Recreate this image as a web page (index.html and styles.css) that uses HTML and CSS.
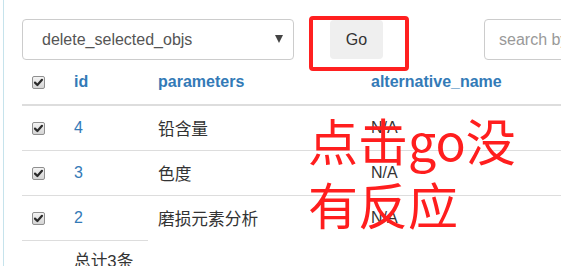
FILE: index.html
```html
<!DOCTYPE html>
<html>
<head>
<meta charset="utf-8">
<link rel="stylesheet" href="styles.css">
</head>
<body>
<div class="page">
  <div class="actions">
    <div class="select">
      <span class="select-text">delete_selected_objs</span>
      <span class="caret"></span>
    </div>
    <div class="go">Go</div>
    <div class="search"><span class="placeholder">search by</span></div>
  </div>
  <div class="table">
    <div class="tr thead">
      <div class="c c-cb"><span class="cb"><svg viewBox="0 0 13 13" width="13" height="13"><path d="M3 6.6 L5.4 9 L10 3.8" fill="none" stroke="#2b2b2b" stroke-width="2.2" stroke-linecap="round" stroke-linejoin="round"/></svg></span></div>
      <div class="c c-id th">id</div>
      <div class="c c-p th">parameters</div>
      <div class="c c-alt th">alternative_name</div>
    </div>
    <div class="tr">
      <div class="c c-cb"><span class="cb"><svg viewBox="0 0 13 13" width="13" height="13"><path d="M3 6.6 L5.4 9 L10 3.8" fill="none" stroke="#2b2b2b" stroke-width="2.2" stroke-linecap="round" stroke-linejoin="round"/></svg></span></div>
      <div class="c c-id link">4</div>
      <div class="c c-p cjk">铅含量</div>
      <div class="c c-alt">N/A</div>
    </div>
    <div class="tr">
      <div class="c c-cb"><span class="cb"><svg viewBox="0 0 13 13" width="13" height="13"><path d="M3 6.6 L5.4 9 L10 3.8" fill="none" stroke="#2b2b2b" stroke-width="2.2" stroke-linecap="round" stroke-linejoin="round"/></svg></span></div>
      <div class="c c-id link">3</div>
      <div class="c c-p cjk">色度</div>
      <div class="c c-alt">N/A</div>
    </div>
    <div class="tr last">
      <div class="c c-cb"><span class="cb"><svg viewBox="0 0 13 13" width="13" height="13"><path d="M3 6.6 L5.4 9 L10 3.8" fill="none" stroke="#2b2b2b" stroke-width="2.2" stroke-linecap="round" stroke-linejoin="round"/></svg></span></div>
      <div class="c c-id link">2</div>
      <div class="c c-p cjk">磨损元素分析</div>
      <div class="c c-alt">N/A</div>
    </div>
    <div class="tfoot"><span class="cjk">总计3条</span></div>
  </div>
  <div class="note-box"></div>
  <div class="note">点击go没<br>有反应</div>
</div>
</body>
</html>
```
FILE: styles.css
```css
html, body {
  margin: 0;
  padding: 0;
  background: #fff;
  overflow: hidden;
}
body {
  font-family: "Liberation Sans", "Noto Sans CJK SC", sans-serif;
  font-size: 16px;
  color: #333;
}
.page {
  position: relative;
  margin-left: 3px;
  border-left: 1px solid #c6e3ec;
  padding-left: 18px;
  height: 266px;
  box-sizing: border-box;
}
.actions {
  display: flex;
  align-items: flex-start;
  padding-top: 19px;
  height: 41px;
}
.actions > * {
  flex: none;
}
.select {
  box-sizing: border-box;
  width: 272px;
  height: 41px;
  border: 1px solid #ccc;
  border-radius: 4px;
  display: flex;
  align-items: center;
  justify-content: space-between;
  padding: 0 10px 0 19px;
  color: #555;
}
.caret {
  width: 0;
  height: 0;
  border-left: 4px solid transparent;
  border-right: 4px solid transparent;
  border-top: 8px solid #444;
  margin-top: -1px;
}
.go {
  margin-left: 36px;
  margin-top: 1px;
  width: 53px;
  height: 39px;
  background: #efefef;
  border-radius: 4px;
  display: flex;
  align-items: center;
  justify-content: center;
  color: #333;
}
.search {
  box-sizing: border-box;
  margin-left: 101px;
  width: 120px;
  height: 41px;
  border: 1px solid #ccc;
  border-radius: 4px;
  display: flex;
  align-items: center;
  padding-left: 14px;
  white-space: nowrap;
  overflow: hidden;
}
.placeholder {
  color: #999;
}
.table {
  width: 600px;
}
.tr {
  display: flex;
  height: 44px;
  align-items: center;
  border-bottom: 1px solid #ddd;
}
.tr.thead {
  height: 44px;
  border-bottom: 2px solid #ddd;
}
.tr.last {
  border-bottom: none;
}
.c {
  box-sizing: border-box;
  padding-left: 8px;
  white-space: nowrap;
  flex: none;
}
.c-cb {
  width: 44px;
  padding-left: 10px;
  display: flex;
  align-items: center;
}
.c-id { width: 84px; }
.c-p { width: 213px; }
.c-alt { width: 200px; }
.th {
  font-weight: bold;
  color: #337ab7;
}
.link {
  color: #337ab7;
}
.cjk {
  font-size: 16.7px;
}
.cb {
  box-sizing: border-box;
  display: block;
  width: 13px;
  height: 13px;
  border: 1px solid #8f8f8f;
  border-radius: 2px;
  background: linear-gradient(#f4f4f4, #d4d4d4);
  position: relative;
}
.cb svg {
  position: absolute;
  left: -1px;
  top: -1px;
}
.tfoot {
  width: 126px;
  border-top: 1px solid #ddd;
  padding-left: 52px;
  padding-top: 7px;
  box-sizing: border-box;
  white-space: nowrap;
}
.note-box {
  position: absolute;
  left: 305px;
  top: 16px;
  width: 100px;
  height: 55px;
  box-sizing: border-box;
  border: 4px solid #ff2020;
  border-radius: 4px;
}
.note {
  position: absolute;
  left: 304px;
  top: 107px;
  font-family: "Noto Sans CJK SC", "Noto Sans", sans-serif;
  font-size: 50px;
  line-height: 64px;
  color: #ff1e1e;
  white-space: nowrap;
}
```
